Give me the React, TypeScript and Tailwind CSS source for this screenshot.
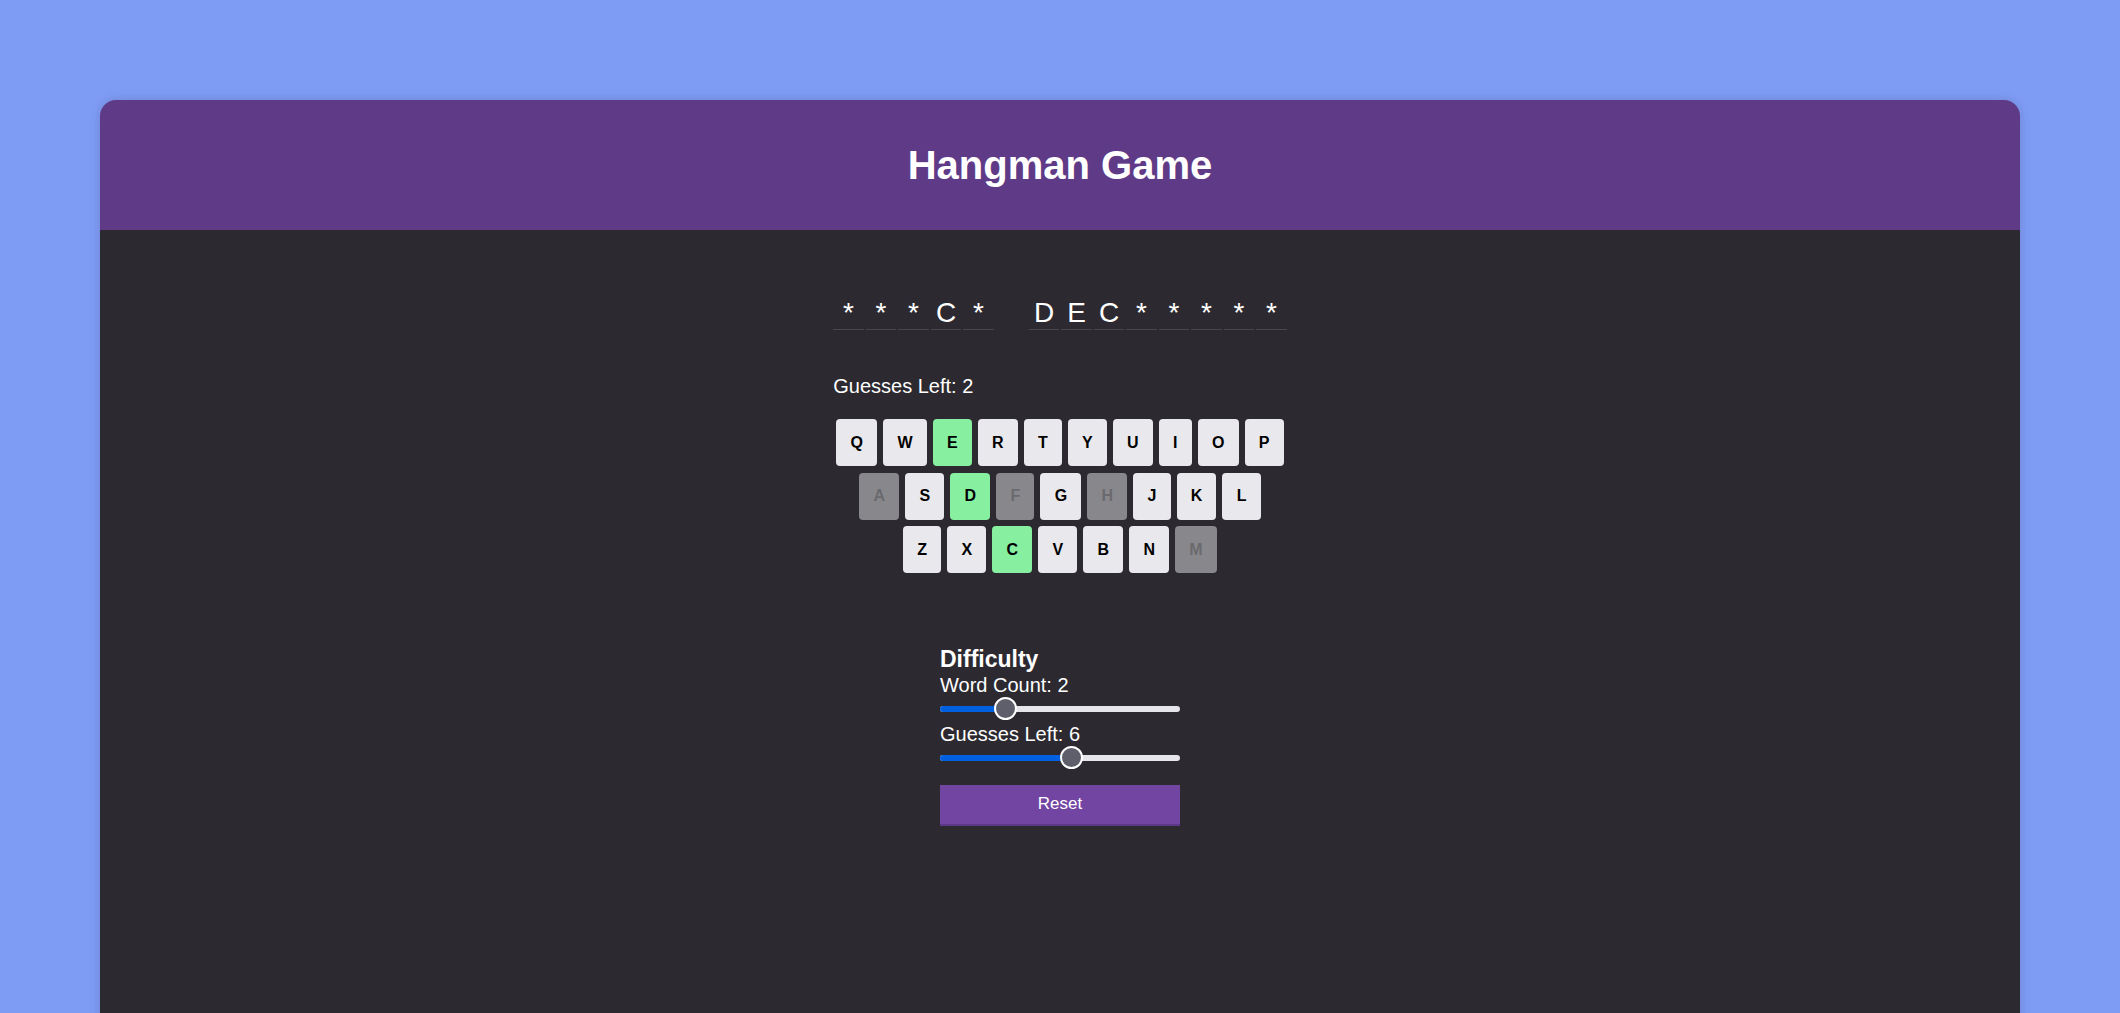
import React from 'react';

const words = [
  ['*', '*', '*', 'C', '*'],
  ['D', 'E', 'C', '*', '*', '*', '*', '*'],
];

const rows = ['QWERTYUIOP', 'ASDFGHJKL', 'ZXCVBNM'];
const correct = ['E', 'D', 'C'];
const wrong = ['A', 'F', 'H', 'M'];

const Slider = ({ value, min, max }: { value: number; min: number; max: number }) => {
  const pct = (value - min) / (max - min);
  return (
    <div className="relative h-[24px] w-[240px] flex items-center">
      <div className="h-[6px] w-full rounded-full bg-[#e6e6ea] overflow-hidden">
        <div className="h-full bg-[#0060df]" style={{ width: `${12 + pct * 216}px` }} />
      </div>
      <div
        className="absolute top-[0.5px] h-[23px] w-[23px] rounded-full bg-[#5f5f6b] border-2 border-white"
        style={{ left: `${pct * 216}px` }}
      />
    </div>
  );
};

const App = () => {
  return (
    <div className="h-screen bg-[#7f9cf5] pt-[100px] px-[100px] overflow-hidden" style={{ fontFamily: '"Liberation Sans", Arial, sans-serif' }}>
      <div className="rounded-t-[16px] overflow-hidden shadow-[0_0_12px_rgba(0,0,0,0.15)]">
        <header className="h-[130px] bg-[#5f3a87] flex items-center justify-center">
          <h1 className="text-[40px] font-bold text-white">Hangman Game</h1>
        </header>

        <main className="bg-[#2c2a30] min-h-[820px] pt-[67px] flex flex-col items-center text-white">
          <div className="flex flex-col">
            <div className="flex gap-[35px]">
              {words.map((word, wi) => (
                <div key={wi} className="flex gap-[2px]">
                  {word.map((ch, ci) => (
                    <span
                      key={ci}
                      className="w-[30.5px] h-[33px] border-b border-[#48474d] text-center text-[28px] leading-[32px]"
                    >
                      {ch}
                    </span>
                  ))}
                </div>
              ))}
            </div>

            <p className="mt-[45px] text-[20px] leading-[23px]">Guesses Left: 2</p>

            <div className="mt-[21px] flex flex-col items-center gap-[6.5px]">
              {rows.map((row) => (
                <div key={row} className="flex gap-[6px]">
                  {row.split('').map((letter) => {
                    const isCorrect = correct.includes(letter);
                    const isWrong = wrong.includes(letter);
                    return (
                      <button
                        key={letter}
                        className={
                          isCorrect
                            ? 'h-[47px] px-[14.2px] rounded-[4px] bg-[#86efa0] text-black text-[16px] font-bold'
                            : isWrong
                            ? 'h-[47px] px-[14.2px] rounded-[4px] bg-[#88888c] text-[#6a6a6e] text-[16px] font-bold'
                            : 'h-[47px] px-[14.2px] rounded-[4px] bg-[#e9e9ed] text-black text-[16px] font-bold'
                        }
                      >
                        {letter}
                      </button>
                    );
                  })}
                </div>
              ))}
            </div>
          </div>

          <div className="mt-[74px] w-[240px] flex flex-col">
            <h3 className="text-[23px] leading-[25px] font-bold">Difficulty</h3>
            <label className="mt-[1.5px] text-[20px] leading-[23px]">Word Count: 2</label>
            <Slider value={2} min={1} max={5} />
            <label className="mt-[2px] text-[20px] leading-[23px]">Guesses Left: 6</label>
            <Slider value={6} min={1} max={10} />
            <button className="mt-[15px] h-[41px] w-[240px] bg-[#7345a3] border-b-2 border-[#5d3889] text-white text-[17px]">
              Reset
            </button>
          </div>
        </main>
      </div>
    </div>
  );
};

export default App;
